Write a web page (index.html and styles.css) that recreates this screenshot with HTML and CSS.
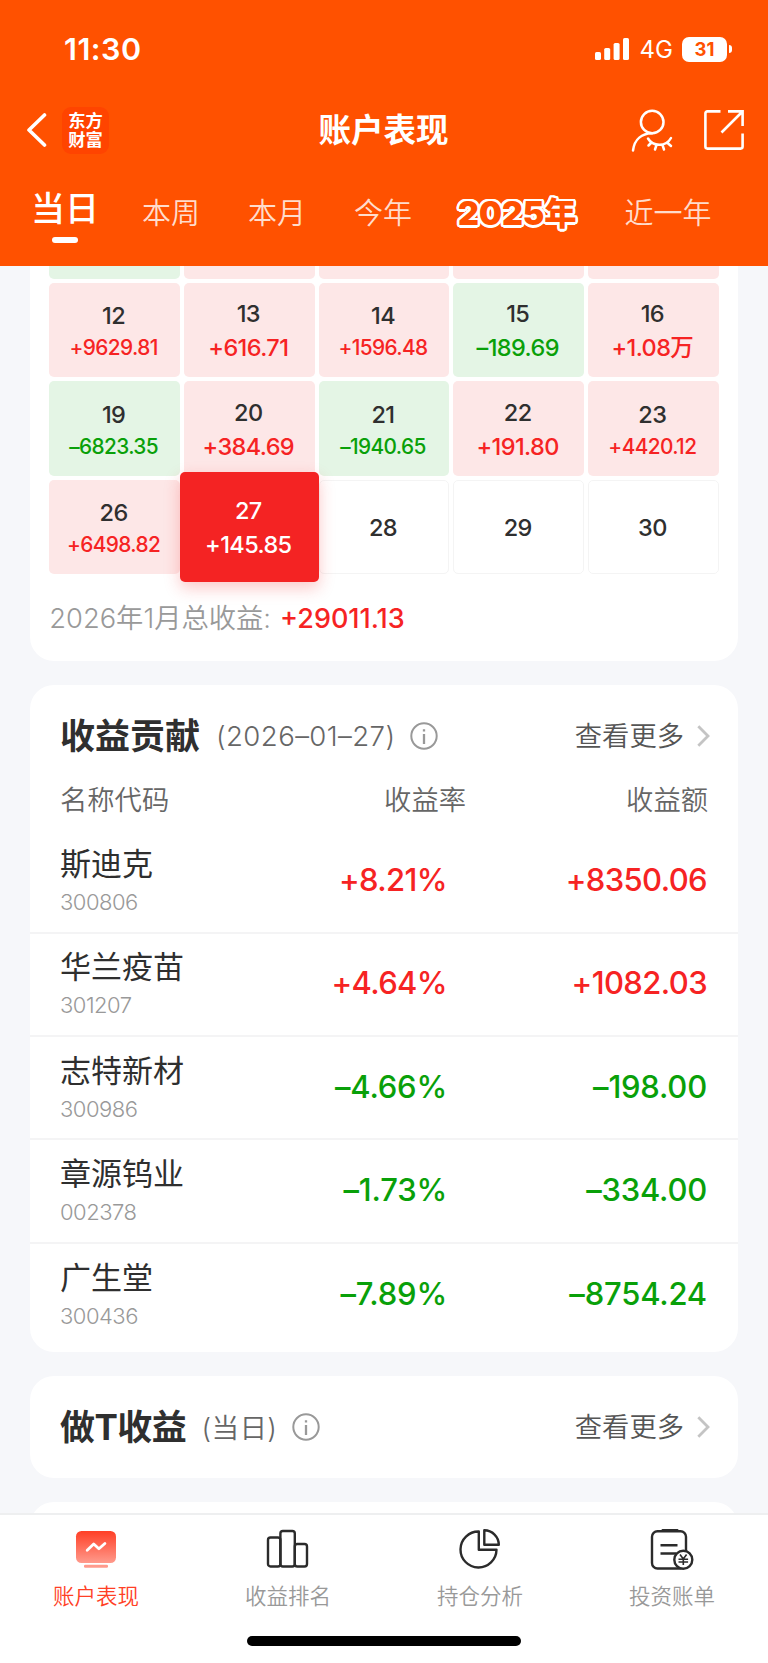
FILE: index.html
```
<!DOCTYPE html>
<html lang="zh-CN">

<head>
    <meta charset="UTF-8">
    <meta name="viewport" content="width=device-width, initial-scale=1.0">
    <title>账户表现</title>
    <link rel="stylesheet" href="styles.css">
</head>

<body>
    <div class="wrapper">
        <div class="header">
            <div class="status">
                <span class="time">11:30</span>
                <svg class="signal" width="34" height="22" viewBox="0 0 34 22" fill="#fff">
                    <rect x="0" y="14" width="6" height="8" rx="1.6" />
                    <rect x="9.2" y="10" width="6" height="12" rx="1.6" />
                    <rect x="18.6" y="5" width="6" height="17" rx="1.6" />
                    <rect x="28" y="0" width="6" height="22" rx="1.6" />
                </svg>
                <span class="net">4G</span>
                <span class="battery">31</span>
                <span class="nub"></span>
            </div>
            <div class="nav">
                <svg class="back" width="20" height="34" viewBox="0 0 20 34" fill="none" stroke="#fff" stroke-width="3.6" stroke-linecap="round" stroke-linejoin="round">
                    <path d="M17.5 2L2 17l15.5 15" />
                </svg>
                <div class="logo"><span>东方</span><span>财富</span></div>
                <h1 class="navTitle">账户表现</h1>
                <svg class="user" width="42" height="43" viewBox="0 0 42 43" fill="none" stroke="#fff" stroke-width="2.5" stroke-linecap="round">
                    <circle cx="21.2" cy="13" r="11.3" />
                    <path d="M2 41.5C3.5 30 11 24.5 21 24.3" />
                    <path d="M17 29.5C22 38 35 38 40 29M20.5 33.5l-3 3M25.5 36l-1.5 4.5M31.5 36l1.5 4.5M36 33.5l4 3.5" />
                </svg>
                <svg class="share" width="40" height="40" viewBox="0 0 40 40" fill="none" stroke="#fff" stroke-width="2.6">
                    <path d="M16.5 1.4H3.4a2 2 0 0 0-2 2V36.6a2 2 0 0 0 2 2H36.6a2 2 0 0 0 2-2V23.5M24 1.4H38.6V16M38 2L17.5 22.5" />
                </svg>
            </div>
            <ul class="tabs">
                <li class="tab active">当日</li>
                <li class="tab">本周</li>
                <li class="tab">本月</li>
                <li class="tab">今年</li>
                <li class="tab year">2025年</li>
                <li class="tab">近一年</li>
            </ul>
        </div>

        <div class="content">
            <div class="card calendar">
                <div class="days">
                    <div class="day cut down"></div>
                    <div class="day cut up"></div>
                    <div class="day cut up"></div>
                    <div class="day cut up"></div>
                    <div class="day cut up"></div>

                    <div class="day up small"><b>12</b><span>+9629.81</span></div>
                    <div class="day up"><b>13</b><span>+616.71</span></div>
                    <div class="day up small"><b>14</b><span>+1596.48</span></div>
                    <div class="day down"><b>15</b><span>–189.69</span></div>
                    <div class="day up"><b>16</b><span>+1.08万</span></div>

                    <div class="day down small"><b>19</b><span>–6823.35</span></div>
                    <div class="day up"><b>20</b><span>+384.69</span></div>
                    <div class="day down small"><b>21</b><span>–1940.65</span></div>
                    <div class="day up"><b>22</b><span>+191.80</span></div>
                    <div class="day up small"><b>23</b><span>+4420.12</span></div>

                    <div class="day up small"><b>26</b><span>+6498.82</span></div>
                    <div class="day current"><b>27</b><span>+145.85</span></div>
                    <div class="day empty"><b>28</b></div>
                    <div class="day empty"><b>29</b></div>
                    <div class="day empty"><b>30</b></div>
                </div>
                <p class="total"><span class="totalLabel">2026年1月总收益:</span><span class="totalNum">+29011.13</span></p>
            </div>

            <div class="card">
                <div class="cardHead">
                    <h2>收益贡献</h2>
                    <span class="date">(2026–01–27)</span>
                    <svg class="info" width="28" height="28" viewBox="0 0 28 28" fill="none" stroke="#999" stroke-width="2">
                        <circle cx="14" cy="14" r="12.7" />
                        <path d="M14 12v10M14 7.2v2.4" stroke-width="2.3" />
                    </svg>
                    <span class="more">查看更多</span>
                    <svg class="arrow" width="13" height="22" viewBox="0 0 13 22" fill="none" stroke="#c4c4c4" stroke-width="2.8">
                        <path d="M1.3 1.2L11 11 1.3 20.8" />
                    </svg>
                </div>
                <div class="row rowHead">
                    <span>名称代码</span>
                    <span class="rate">收益率</span>
                    <span class="sum">收益额</span>
                </div>
                <div class="row red">
                    <div class="name"><p>斯迪克</p><i>300806</i></div>
                    <span class="rate">+8.21%</span>
                    <span class="sum">+8350.06</span>
                </div>
                <div class="row red">
                    <div class="name"><p>华兰疫苗</p><i>301207</i></div>
                    <span class="rate">+4.64%</span>
                    <span class="sum">+1082.03</span>
                </div>
                <div class="row green">
                    <div class="name"><p>志特新材</p><i>300986</i></div>
                    <span class="rate">–4.66%</span>
                    <span class="sum">–198.00</span>
                </div>
                <div class="row green">
                    <div class="name"><p>章源钨业</p><i>002378</i></div>
                    <span class="rate">–1.73%</span>
                    <span class="sum">–334.00</span>
                </div>
                <div class="row green last">
                    <div class="name"><p>广生堂</p><i>300436</i></div>
                    <span class="rate">–7.89%</span>
                    <span class="sum">–8754.24</span>
                </div>
            </div>

            <div class="card">
                <div class="cardHead">
                    <h2 class="shortTitle">做T收益</h2>
                    <span class="date today">(当日)</span>
                    <svg class="info" width="28" height="28" viewBox="0 0 28 28" fill="none" stroke="#999" stroke-width="2">
                        <circle cx="14" cy="14" r="12.7" />
                        <path d="M14 12v10M14 7.2v2.4" stroke-width="2.3" />
                    </svg>
                    <span class="more">查看更多</span>
                    <svg class="arrow" width="13" height="22" viewBox="0 0 13 22" fill="none" stroke="#c4c4c4" stroke-width="2.8">
                        <path d="M1.3 1.2L11 11 1.3 20.8" />
                    </svg>
                </div>
            </div>

            <div class="card next"></div>
        </div>

        <div class="footer">
            <ul class="menu">
                <li class="item on">
                    <svg width="44" height="44" viewBox="0 0 44 44" fill="none">
                        <defs>
                            <linearGradient id="fade" x1="0" y1="0" x2="0" y2="1">
                                <stop offset="0" stop-color="#ff3f26" />
                                <stop offset="1" stop-color="#ff9a8c" />
                            </linearGradient>
                        </defs>
                        <rect x="2" y="3" width="40" height="32" rx="5.5" fill="url(#fade)" />
                        <rect x="10" y="36.7" width="24" height="3" rx="1.3" fill="#ff9a8c" />
                        <path d="M13.2 22.3l6.5-6.3 5.2 4.8 6-5.3" stroke="#fff" stroke-width="2.8" stroke-linecap="round" stroke-linejoin="round" />
                    </svg>
                    <span>账户表现</span>
                </li>
                <li class="item">
                    <svg width="44" height="44" viewBox="0 0 44 44" fill="none" stroke="#2b2b2b" stroke-width="2.4">
                        <rect x="2" y="9.5" width="12.4" height="29" rx="2.5" />
                        <rect x="14.4" y="3" width="14.4" height="35.5" rx="2.5" />
                        <rect x="28.8" y="16" width="12.2" height="22.5" rx="2.5" />
                    </svg>
                    <span>收益排名</span>
                </li>
                <li class="item">
                    <svg width="44" height="44" viewBox="0 0 44 44" fill="none" stroke="#2b2b2b" stroke-width="2.4" stroke-linejoin="round">
                        <path d="M20.8 3.5A18 18 0 1 0 38.5 21.8H20.8Z" />
                        <path d="M26.3 2.3V16.8H40.8A14.5 14.5 0 0 0 26.3 2.3Z" />
                    </svg>
                    <span>持仓分析</span>
                </li>
                <li class="item">
                    <svg width="44" height="44" viewBox="0 0 44 44" fill="none" stroke="#2b2b2b" stroke-width="2.4">
                        <path d="M12.5 1.9H27.5" stroke-width="2" stroke-linecap="round" />
                        <rect x="2" y="3.3" width="34" height="37.2" rx="5.5" />
                        <path d="M10.5 17.3H27.5M10.5 25.5H26" stroke-width="2.6" />
                        <circle cx="33.3" cy="31.7" r="9" fill="#fff" />
                        <path d="M30 26.5l3.3 4.5 3.3-4.5M33.3 31v6M28.5 31.2h9.6M28.5 34h9.6" stroke-width="1.6" />
                    </svg>
                    <span>投资账单</span>
                </li>
            </ul>
            <div class="home"></div>
        </div>
    </div>
</body>

</html>
```
FILE: styles.css
```
* {
    margin: 0;
    padding: 0;
    list-style: none;
    box-sizing: border-box;
}

body {
    font-family: Inter, "Noto Sans CJK SC", sans-serif;
    background-color: #f6f7fa;
    color: #2f2f2f;
}

i {
    font-style: normal;
}

svg {
    display: block;
    flex-shrink: 0;
}

.wrapper {
    display: flex;
    flex-direction: column;
    width: 768px;
    height: 1663px;
    overflow: hidden;
}

/* 顶部 */
.header {
    flex-shrink: 0;
    height: 266px;
    background-color: #ff5100;
    color: #fff;
}

.status {
    display: flex;
    align-items: center;
    height: 98px;
    padding: 0 36px 0 64px;
}

.time {
    flex: 1;
    padding-bottom: 1px;
    font-size: 30.5px;
    font-weight: 600;
    letter-spacing: .5px;
}

.net {
    margin: 1px 9px 0 11px;
    font-size: 24px;
}

.battery {
    width: 45px;
    height: 25px;
    border-radius: 7px;
    background-color: #fff;
    color: #ff5100;
    font-size: 18.5px;
    font-weight: 700;
    line-height: 25px;
    text-align: center;
}

.nub {
    width: 3px;
    height: 8px;
    margin-left: 2px;
    border-radius: 0 4px 4px 0;
    background-color: #fff;
}

.nav {
    display: flex;
    align-items: center;
    height: 64px;
    padding: 0 24px 0 27px;
}

.logo {
    width: 47px;
    height: 47px;
    margin-left: 15px;
    padding-top: 3px;
    border-radius: 9px;
    background-color: #ff4400;
    font-family: "Noto Sans CJK SC", sans-serif;
    font-size: 17.3px;
    font-weight: 700;
    line-height: 19.5px;
    text-align: center;
}

.logo span {
    display: block;
}

.navTitle {
    flex: 1;
    padding: 0 0 5px 27px;
    font-size: 32.5px;
    font-weight: 600;
    text-align: center;
}

.share {
    margin-left: 31px;
}

.tabs {
    display: flex;
    align-items: center;
    height: 104px;
    padding-left: 31px;
}

.tab {
    margin-right: 48px;
    font-size: 29px;
    font-weight: 350;
    line-height: 40px;
    color: #ffdccc;
    white-space: nowrap;
}

.active {
    display: flex;
    flex-direction: column;
    align-items: center;
    margin-right: 43px;
    padding-top: 4px;
    font-size: 34px;
    font-weight: 500;
    color: #fff;
}

.active::after {
    content: "";
    width: 26px;
    height: 6px;
    margin-top: 8px;
    border-radius: 3px;
    background-color: #fff;
}

/* 描边字 */
.year {
    margin: 0 48px 0 -2px;
    font-size: 32.3px;
    font-weight: 900;
    color: #ff5100;
    text-shadow: 2.5px 0 #fff, -2.5px 0 #fff, 0 2.5px #fff, 0 -2.5px #fff,
        1.8px 1.8px #fff, -1.8px 1.8px #fff, 1.8px -1.8px #fff, -1.8px -1.8px #fff,
        2.3px 1px #fff, -2.3px 1px #fff, 2.3px -1px #fff, -2.3px -1px #fff,
        1px 2.3px #fff, -1px 2.3px #fff, 1px -2.3px #fff, -1px -2.3px #fff;
}

/* 内容 */
.content {
    flex: 1;
    padding: 0 30px;
    overflow: hidden;
}

.card {
    margin-bottom: 24px;
    border-radius: 24px;
    background-color: #fff;
    overflow: hidden;
}

.calendar {
    height: 395px;
    padding: 0 19.3px;
    border-radius: 0 0 24px 24px;
}

.days {
    display: grid;
    grid-template-columns: repeat(5, 1fr);
    grid-template-rows: 13px repeat(3, 94.4px);
    gap: 4px;
}

.day {
    display: flex;
    flex-direction: column;
    align-items: center;
    justify-content: center;
    padding: 2px 2px 0 0;
    border-radius: 5px;
    font-size: 23.5px;
    line-height: 34px;
    letter-spacing: -.6px;
}

.day b {
    font-size: 23.5px;
    font-weight: 500;
    color: #2f2f2f;
}

.day span {
    font-weight: 500;
}

.small {
    padding-top: 4px;
    font-size: 20.8px;
    line-height: 32px;
}

.up {
    background-color: #fde7e7;
    color: #f62323;
}

.down {
    background-color: #e4f5e5;
    color: #09a009;
}

.cut {
    border-radius: 0 0 5px 5px;
}

.empty {
    border: 1px solid #f4f4f4;
}

.current {
    z-index: 1;
    margin: -8px -4px;
    background-color: #f42323;
    box-shadow: 0 6px 16px rgba(244, 35, 35, .25);
    color: #fff;
}

.current b {
    color: #fff;
}

.total {
    display: flex;
    align-items: center;
    gap: 9px;
    margin-top: 25px;
    line-height: 40px;
}

.totalLabel {
    font-size: 27.3px;
    font-weight: 350;
    color: #999;
}

.totalNum {
    font-size: 27px;
    font-weight: 500;
    color: #f62323;
}

.cardHead {
    display: flex;
    align-items: center;
    height: 102px;
    padding: 0 28px 0 30px;
}

.cardHead h2 {
    padding-bottom: 5px;
    font-size: 35px;
    font-weight: 700;
}

.cardHead .shortTitle {
    letter-spacing: -.5px;
}

.date {
    margin-left: 16px;
    padding-bottom: 1px;
    font-size: 27.6px;
    font-weight: 350;
    letter-spacing: .4px;
    color: #666;
}

.today {
    margin-left: 15px;
    padding-bottom: 2px;
}

.info {
    margin-left: 15px;
}

.more {
    margin-left: auto;
    padding-bottom: 4px;
    font-size: 27.3px;
    font-weight: 350;
    color: #555;
}

.arrow {
    margin-left: 13px;
}

.row {
    display: grid;
    grid-template-columns: 200px 187px 1fr;
    align-items: center;
    height: 103.3px;
    padding: 0 31px 0 30px;
    border-bottom: 2px solid #f4f4f5;
    font-size: 31px;
    font-weight: 500;
    letter-spacing: -.6px;
}

.rowHead {
    grid-template-columns: 200px 206px 1fr;
    height: 43.5px;
    padding: 0 30px 15px;
    border: none;
    font-size: 27.3px;
    font-weight: 350;
    line-height: 28px;
    letter-spacing: 0;
    color: #666;
}

.last {
    height: 108px;
    padding-bottom: 6px;
    border: none;
}

.rate,
.sum {
    text-align: right;
}

.red .rate,
.red .sum,
.green .rate,
.green .sum {
    padding-bottom: 3px;
}

.red {
    color: #f62323;
}

.green {
    color: #09a009;
    letter-spacing: -.2px;
}

.name p {
    font-size: 31px;
    font-weight: 400;
    line-height: 42px;
    letter-spacing: 0;
    color: #2f2f2f;
}

.name i {
    display: block;
    font-size: 22px;
    font-weight: 350;
    line-height: 34px;
    letter-spacing: -.5px;
    color: #999;
}

/* 底部 */
.footer {
    flex-shrink: 0;
    height: 150px;
    border-top: 2px solid #eeeff0;
    background-color: #fff;
}

.next {
    height: 60px;
}

.menu {
    display: flex;
    height: 121px;
}

.item {
    display: flex;
    flex: 1;
    flex-direction: column;
    align-items: center;
    padding-top: 13px;
    font-size: 21.5px;
    font-weight: 350;
    line-height: 32px;
    color: #999;
}

.item span {
    margin-top: 8px;
}

.on {
    color: #ff3f26;
}

.home {
    width: 274px;
    height: 10px;
    margin: 0 auto;
    border-radius: 5px;
    background-color: #000;
}
```
